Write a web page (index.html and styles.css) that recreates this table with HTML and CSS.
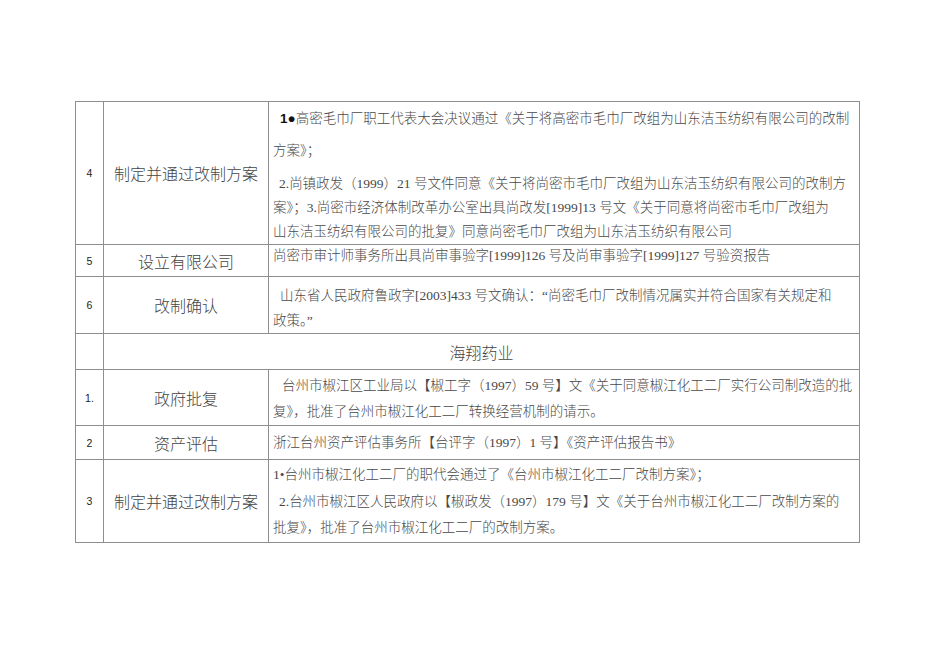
FILE: index.html
```html
<!DOCTYPE html>
<html lang="zh">
<head>
<meta charset="utf-8">
<title>改制情况</title>
<link rel="stylesheet" href="styles.css">
</head>
<body>
<table class="sheet">
  <colgroup>
    <col class="c-no">
    <col class="c-item">
    <col class="c-desc">
  </colgroup>
  <tbody>
    <tr class="r4">
      <td class="no">4</td>
      <td class="item">制定并通过改制方案</td>
      <td class="desc">
        <p class="p-wide ind"><b class="lead">1●</b>高密毛巾厂职工代表大会决议通过《关于将高密市毛巾厂改组为山东洁玉纺织有限公司的改制<br>方案》；</p>
        <p class="p-tight"><span class="ind-s">2.</span>尚镇政发（1999）21 号文件同意《关于将尚密市毛巾厂改组为山东洁玉纺织有限公司的改制方<br>案》；3.尚密市经济体制改革办公室出具尚改发[1999]13 号文《关于同意将尚密市毛巾厂改组为<br>山东洁玉纺织有限公司的批复》同意尚密毛巾厂改组为山东洁玉纺织有限公司</p>
      </td>
    </tr>
    <tr class="r5">
      <td class="no">5</td>
      <td class="item">设立有限公司</td>
      <td class="desc"><p class="p-one">尚密市审计师事务所出具尚审事验字[1999]126 号及尚审事验字[1999]127 号验资报告</p></td>
    </tr>
    <tr class="r6">
      <td class="no">6</td>
      <td class="item">改制确认</td>
      <td class="desc"><p class="p-two ind">山东省人民政府鲁政字[2003]433 号文确认：“尚密毛巾厂改制情况属实并符合国家有关规定和<br>政策。”</p></td>
    </tr>
    <tr class="rh">
      <td class="no"></td>
      <td class="head" colspan="2">海翔药业</td>
    </tr>
    <tr class="r1">
      <td class="no">1.</td>
      <td class="item">政府批复</td>
      <td class="desc"><p class="p-two2 ind2">台州市椒江区工业局以【椒工字（1997）59 号】文《关于同意椒江化工二厂实行公司制改造的批<br>复》，批准了台州市椒江化工二厂转换经营机制的请示。</p></td>
    </tr>
    <tr class="r2">
      <td class="no">2</td>
      <td class="item">资产评估</td>
      <td class="desc mid"><p class="p-one">浙江台州资产评估事务所【台评字（1997）1 号】《资产评估报告书》</p></td>
    </tr>
    <tr class="r3">
      <td class="no">3</td>
      <td class="item">制定并通过改制方案</td>
      <td class="desc"><p class="p-three">1•台州市椒江化工二厂的职代会通过了《台州市椒江化工二厂改制方案》；<br><span class="ind-s">2.</span>台州市椒江区人民政府以【椒政发（1997）179 号】文《关于台州市椒江化工二厂改制方案的<br>批复》，批准了台州市椒江化工二厂的改制方案。</p></td>
    </tr>
  </tbody>
</table>
</body>
</html>
```

FILE: styles.css
```css
html, body {
  margin: 0;
  padding: 0;
  background: #ffffff;
}

body {
  padding: 101px 0 0 75px;
}

.sheet {
  border-collapse: collapse;
  table-layout: fixed;
  width: 784px;
}

.c-no { width: 28px; }
.c-item { width: 165px; }
.c-desc { width: 591px; }

.sheet td {
  border: 1px solid #8e8e8e;
  padding: 0;
}

.no {
  text-align: center;
  vertical-align: middle;
  font-family: "Liberation Sans", "DejaVu Sans", sans-serif;
  font-size: 10.5px;
  color: #222;
}

.item, .head {
  text-align: center;
  vertical-align: middle;
  font-family: "Noto Sans CJK SC", sans-serif;
  font-size: 16px;
  font-weight: 300;
  line-height: 20px;
  color: #444;
  white-space: nowrap;
}

.desc {
  vertical-align: top;
  padding: 0 0 0 4px !important;
  font-family: "Liberation Serif", "Noto Sans CJK SC", serif;
  font-size: 13.5px;
  font-weight: 300;
  color: #484848;
  white-space: nowrap;
}

.desc.mid { vertical-align: middle; }

.desc p { margin: 0; }

.ind { text-indent: 7px; }
.ind2 { text-indent: 9px; }
.ind-s { padding-left: 6px; }

.lead {
  font-family: "Liberation Sans", sans-serif;
  font-weight: 700;
  color: #111;
}

.r4 { height: 143px; }
.r5 { height: 32px; }
.r6 { height: 54px; }
.rh { height: 36px; }
.r1 { height: 56px; }
.r2 { height: 34px; }
.r3 { height: 83px; }

.p-wide { line-height: 32px; padding-top: 1px; }
.p-tight { line-height: 24px; margin-top: 5px !important; }
.p-one { line-height: 20px; padding-top: 1px; }
.p-two { line-height: 25px; padding-top: 6px; }
.p-two2 { line-height: 26px; padding-top: 3px; }
.p-three { line-height: 26.5px; padding-top: 2px; }
```
